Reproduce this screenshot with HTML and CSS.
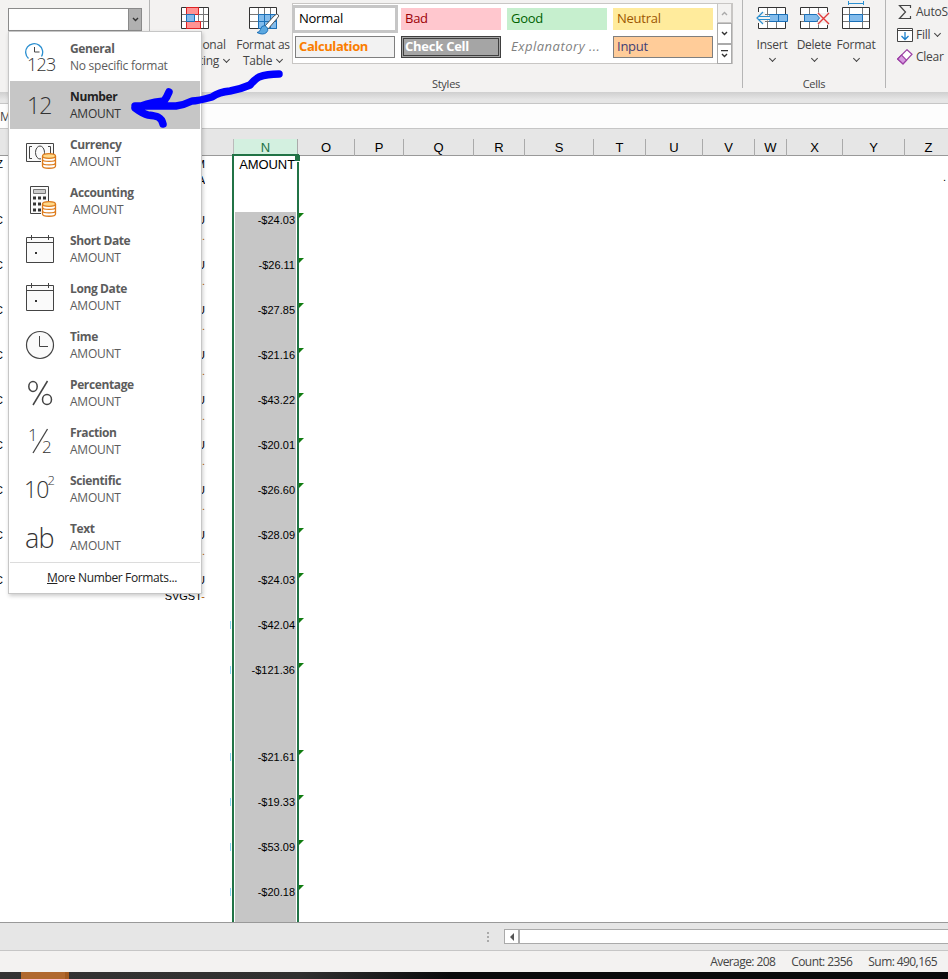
FILE: index.html
```html
<!DOCTYPE html>
<html lang="en">
<head>
  <meta charset="UTF-8" />
  <title>Excel - Number format</title>
  <link rel="stylesheet" href="styles.css">
</head>
<body>

  <!-- Ribbon -->
  <header class="ribbon">
    <div class="group number-group">
      <div class="format-box"><span class="format-arrow"><svg width="7" height="5"><path d="M1 1l2.5 2.5L6 1" fill="none" stroke="#333" stroke-width="1.4"/></svg></span></div>
    </div>

    <div class="group styles-group">
      <div class="tools">
        <div class="tool cond">
          <svg width="28" height="26" viewBox="0 0 28 26"><path d="M1 4h26v21H1z" fill="#fff"/><path d="M1 11.500h26M1 18.500h26M5.500 4v21M17.500 4v21M22.500 4v21" stroke="#777"/><path d="M.5 4.500h27v21H.5z" fill="none" stroke="#333"/><path d="M5.500 4.500h12v7h-12zM5.500 18.500h14v7h-14z" fill="#ff9393" stroke="#d22"/><path d="M5.500 11.500h8v7h-8z" fill="#83bcec" stroke="#1b70b8"/></svg>
          <span>Conditional</span>
          <span>Formatting <i class="chev"></i></span>
        </div>
        <div class="tool table">
          <svg width="31" height="32" viewBox="0 0 31 32"><path d="M1 4h26v21H1z" fill="#fff"/><path d="M1 11.500h26M1 18.500h26M9.500 4v21M15.500 4v21M21.500 4v21" stroke="#777"/><path d="M.5 4.500h27v21H.5z" fill="none" stroke="#333"/><path d="M9.500 11.500h18v14h-18z" fill="#83bcec" stroke="#1b70b8"/><path d="M9 18.500h18M15.500 11v14M21.500 11v14" stroke="#1b70b8"/><path d="M29 11.500q2 1-1 4L19 26l-3-3 9-10q3-3 4-1.500z" fill="#fff" stroke="#555"/><path d="M16 22.500q-4 0-4.500 4-1 3-3.500 3 6 3 9.500 0 2-2 1-4.500z" fill="#5ba8e0" stroke="#1b70b8"/></svg>
          <span>Format as</span>
          <span>Table <i class="chev"></i></span>
        </div>
      </div>
      <div class="gallery">
        <div class="swatches">
          <div class="swatch normal">Normal</div>
          <div class="swatch bad">Bad</div>
          <div class="swatch good">Good</div>
          <div class="swatch neutral">Neutral</div>
          <div class="swatch calc">Calculation</div>
          <div class="swatch check">Check Cell</div>
          <div class="swatch expl">Explanatory ...</div>
          <div class="swatch input">Input</div>
        </div>
        <div class="scroller">
          <div class="off"><svg width="7" height="5"><path d="M1 4l2.500-2.500L6 4" fill="none" stroke="#aaa" stroke-width="1.400"/></svg></div>
          <div><svg width="7" height="5"><path d="M1 1l2.500 2.500L6 1" fill="none" stroke="#333" stroke-width="1.400"/></svg></div>
          <div><svg width="7" height="8"><path d="M0 .5h7M1 4l2.500 2.500L6 4" fill="none" stroke="#333" stroke-width="1.400"/></svg></div>
        </div>
      </div>
      <div class="group-label">Styles</div>
    </div>

    <div class="group cells-group">
      <div class="cell-tools">
        <div class="tool">
          <svg width="32" height="30" viewBox="0 0 32 30"><path d="M3 8h26v20H3z" fill="#fff"/><path d="M3 14.500h26M3 21.500h26M11.500 8v20M20.500 8v20" stroke="#777"/><path d="M2.500 7.500h27v21h-27z" fill="none" stroke="#333"/><path d="M0 12h9v11H0z" fill="#f3f2f1"/><path d="M13.500 14.500h18v7h-18zM22.500 14v7" fill="#83bcec" stroke="#1b70b8"/><path d="M1.500 18L7 12.500v3h7v5H7v3z" fill="#f3f2f1"/><path d="M2 16.500h12M2 19.500h12M7 12l-6 6 6 6" fill="none" stroke="#2b8fd0" stroke-width="1.200"/></svg>
          <span>Insert</span><i class="chev"></i>
        </div>
        <div class="tool">
          <svg width="32" height="30" viewBox="0 0 32 30"><path d="M3 8h26v20H3z" fill="#fff"/><path d="M3 14.500h26M3 21.500h26M11.500 8v20M20.500 8v20" stroke="#777"/><path d="M2.500 7.500h27v21h-27z" fill="none" stroke="#333"/><path d="M0 15h7v6H0zM20 13h12v10H20z" fill="#f3f2f1"/><path d="M6.500 14.500h12l3 3.500-3 3.500h-12z" fill="#83bcec" stroke="#1b70b8"/><path d="M20 13l11 11M31 13L20 24" stroke="#f3f2f1" stroke-width="3.500"/><path d="M20 13l11 11M31 13L20 24" stroke="#e33b3b" stroke-width="1.400"/></svg>
          <span>Delete</span><i class="chev"></i>
        </div>
        <div class="tool">
          <svg width="32" height="30" viewBox="0 0 32 30"><path d="M3 8h26v20H3z" fill="#fff"/><path d="M3 14.500h26M3 21.500h26M9.500 8v20M22.500 8v20" stroke="#777"/><path d="M2.500 7.500h27v21h-27z" fill="none" stroke="#333"/><path d="M9.500 14.500h13v7h-13z" fill="#83bcec" stroke="#1b70b8"/><path d="M8.500 1v4M23.500 1v4M8 3.500h16" stroke="#2b8fd0"/></svg>
          <span>Format</span><i class="chev"></i>
        </div>
      </div>
      <div class="group-label">Cells</div>
    </div>

    <div class="group editing-group">
      <div class="edit-row"><svg width="16" height="16" viewBox="0 0 16 16"><path d="M13.500 4V1.500H2.500L8.500 8l-6 6.500h11V12" fill="none" stroke="#444" stroke-width="1.200"/></svg>AutoSum</div>
      <div class="edit-row"><svg width="16" height="16" viewBox="0 0 16 16"><path d="M.5 1.500h15v13H.5zM.5 3.500h15" fill="#fff" stroke="#444"/><path d="M8 5v7M4.500 9L8 12.500 11.500 9" fill="none" stroke="#1b80cc" stroke-width="1.300"/></svg>Fill <i class="chev"></i></div>
      <div class="edit-row"><svg width="16" height="16" viewBox="0 0 16 16"><path d="M.7 10L10 .7l5 4.500L6 15z" fill="#fff" stroke="#9c3fa5" stroke-width="1.200"/><path d="M.7 10l3.800-3.800 5 5L6 15z" fill="#d79be0" stroke="#9c3fa5" stroke-width="1.200"/></svg>Clear <i class="chev"></i></div>
    </div>
  </header>

  <div class="ribbon-shadow"></div>
  <div class="formula-bar">M</div>

  <!-- Sheet -->
  <div class="col-heads">
    <div class="spacer"></div>
    <div class="col selected">N</div>
    <div class="col">O</div>
    <div class="col">P</div>
    <div class="col">Q</div>
    <div class="col">R</div>
    <div class="col">S</div>
    <div class="col">T</div>
    <div class="col">U</div>
    <div class="col">V</div>
    <div class="col">W</div>
    <div class="col">X</div>
    <div class="col">Y</div>
    <div class="col">Z</div>
  </div>

  <main class="sheet">
    <div class="col-l">
      <div class="head">Z</div>
      <div>C</div><div>C</div><div>C</div><div>C</div><div>C</div><div>C</div><div>C</div><div>C</div><div>C</div>
    </div>
    <div class="col-m">
      <div class="head">M<br>A</div>
      <div>U<br><b>.</b></div><div>U<br><b>.</b></div><div>U<br><b>.</b></div><div>U<br><b>.</b></div><div>U<br><b>.</b></div><div>U<br><b>.</b></div><div>U<br><b>.</b></div><div>U<br><b>.</b></div>
      <div>U<br>SVGST<b>-</b></div>
    </div>
    <div class="marks">
      <i></i><i class="tall"></i><i></i><i></i><i></i><i></i>
    </div>
    <div class="col-n">
      <div class="head">AMOUNT</div>
      <div>-$24.03</div>
      <div>-$26.11</div>
      <div>-$27.85</div>
      <div>-$21.16</div>
      <div>-$43.22</div>
      <div>-$20.01</div>
      <div>-$26.60</div>
      <div>-$28.09</div>
      <div>-$24.03</div>
      <div>-$42.04</div>
      <div class="tall">-$121.36</div>
      <div>-$21.61</div>
      <div>-$19.33</div>
      <div>-$53.09</div>
      <div>-$20.18</div>
    </div>
    <div class="col-z">.</div>
  </main>

  <div class="tab-strip">
    <div class="grip"><i></i><i></i><i></i></div>
    <div class="scroll-left"><svg width="4" height="8"><path d="M4 0v8L0 4z" fill="#555"/></svg></div>
    <div class="scroll-track"></div>
  </div>
  <footer class="status">
    <span>Average: 208</span>
    <span>Count: 2356</span>
    <span>Sum: 490,165</span>
  </footer>
  <div class="taskbar"><div class="task"></div></div>

  <!-- Number format menu -->
  <div class="format-menu">
    <div class="item">
      <svg width="32" height="34" viewBox="0 0 32 34"><path d="M3.500 17.500a8.500 8.500 0 1 1 13-2" fill="none" stroke="#2b8fd0" stroke-width="1.300"/><path d="M9.500 6v5h5" fill="none" stroke="#444"/><text x="2" y="30" class="glyph s18">123</text></svg>
      <div><b>General</b><span>No specific format</span></div>
    </div>
    <div class="item active">
      <svg width="32" height="34" viewBox="0 0 32 34"><text x="2" y="25" class="glyph s23">12</text></svg>
      <div><b>Number</b><span>AMOUNT</span></div>
    </div>
    <div class="item">
      <svg width="32" height="34" viewBox="0 0 32 34"><path d="M1.500 6.500h27v18h-27z" fill="#fafafa" stroke="#444"/><path d="M7 9.500H4.500v12H7M23 9.500h2.500v12H23" fill="none" stroke="#444"/><ellipse cx="15" cy="15.500" rx="4.500" ry="6.500" fill="#fafafa" stroke="#444"/><path d="M16 17h16v16H16z" fill="#fff"/><path d="M17.500 19v10c0 3 13 3 13 0V19" fill="#fff" stroke="#dc7b1c" stroke-width="1.300"/><path d="M17.500 22.500c0 2.500 13 2.500 13 0M17.500 26c0 2.500 13 2.500 13 0" fill="none" stroke="#dc7b1c" stroke-width="1.300"/><ellipse cx="24" cy="19" rx="6.500" ry="2.300" fill="#ffd98a" stroke="#dc7b1c" stroke-width="1.300"/></svg>
      <div><b>Currency</b><span>AMOUNT</span></div>
    </div>
    <div class="item">
      <svg width="32" height="34" viewBox="0 0 32 34"><path d="M5.500 1.500h18v27h-18z" fill="#fafafa" stroke="#444"/><path d="M8.500 4.500h12v4h-12z" fill="#ccc" stroke="#777"/><path d="M8 13h3M13 13h3M18 13h3M8 19h3M13 19h3M8 25h3M13 25h3" stroke="#333" stroke-width="3"/><path d="M16 17h16v16H16z" fill="#fff"/><path d="M17.500 19v10c0 3 13 3 13 0V19" fill="#fff" stroke="#dc7b1c" stroke-width="1.300"/><path d="M17.500 22.500c0 2.500 13 2.500 13 0M17.500 26c0 2.500 13 2.500 13 0" fill="none" stroke="#dc7b1c" stroke-width="1.300"/><ellipse cx="24" cy="19" rx="6.500" ry="2.300" fill="#ffd98a" stroke="#dc7b1c" stroke-width="1.300"/></svg>
      <div><b>Accounting</b><span>&nbsp;AMOUNT</span></div>
    </div>
    <div class="item">
      <svg width="32" height="34" viewBox="0 0 32 34"><path d="M1.500 4.500h27v25h-27zM1.500 9.500h27M6.500 2v5M23.500 2v5" fill="#fafafa" stroke="#444"/><path d="M10 19h2v2h-2z" fill="#333"/></svg>
      <div><b>Short Date</b><span>AMOUNT</span></div>
    </div>
    <div class="item">
      <svg width="32" height="34" viewBox="0 0 32 34"><path d="M1.500 4.500h27v25h-27zM1.500 9.500h27M6.500 2v5M23.500 2v5" fill="#fafafa" stroke="#444"/><path d="M10 19h2v2h-2z" fill="#333"/></svg>
      <div><b>Long Date</b><span>AMOUNT</span></div>
    </div>
    <div class="item">
      <svg width="32" height="34" viewBox="0 0 32 34"><circle cx="15" cy="16" r="13.500" fill="#fafafa" stroke="#444" stroke-width="1.200"/><path d="M14.500 7v10.500H23" fill="none" stroke="#444"/></svg>
      <div><b>Time</b><span>AMOUNT</span></div>
    </div>
    <div class="item">
      <svg width="32" height="34" viewBox="0 0 32 34"><g fill="none" stroke="#444" stroke-width="1.500"><ellipse cx="8" cy="9.500" rx="4.200" ry="5"/><ellipse cx="22" cy="22.500" rx="4.500" ry="5"/><path d="M22.500 4L8 28"/></g></svg>
      <div><b>Percentage</b><span>AMOUNT</span></div>
    </div>
    <div class="item">
      <svg width="32" height="34" viewBox="0 0 32 34"><text x="3" y="16" class="glyph s17">1</text><path d="M22.500 4L8 28" stroke="#444" stroke-width="1.300"/><text x="17" y="28" class="glyph s17">2</text></svg>
      <div><b>Fraction</b><span>AMOUNT</span></div>
    </div>
    <div class="item">
      <svg width="32" height="34" viewBox="0 0 32 34"><text x="-1" y="25" class="glyph s23">10</text><text x="22.500" y="12" class="glyph s13">2</text></svg>
      <div><b>Scientific</b><span>AMOUNT</span></div>
    </div>
    <div class="item">
      <svg width="32" height="34" viewBox="0 0 32 34"><text x="0" y="27" class="glyph s27">ab</text></svg>
      <div><b>Text</b><span>AMOUNT</span></div>
    </div>
    <div class="more"><u>M</u>ore Number Formats...</div>
  </div>

  <!-- Hand-drawn arrow -->
  <svg class="arrow" width="160" height="64" viewBox="0 0 160 64">
    <path d="M151 9q-12 0-20 3-4 2-9 8-9 4-20 6-11 1-18 6-14 4-20 4-8 4-16 5H7M41 27q-2 5-5 9-10 1-17 3L7 43q8 6 13 7 8 1 10 2 4 2 5 7"/>
  </svg>

</body>
</html>
```
FILE: styles.css
```css
:root {
  --ui: "Open Sans", "Noto Sans", sans-serif;
  --ribbon: #f3f2f1;
  --strip: #e6e6e6;
  --line: #999;
  --green: #217346;
}

* {
  box-sizing: border-box;
}

body {
  margin: 0;
  width: 948px;
  height: 979px;
  overflow: hidden;
  display: flex;
  flex-direction: column;
  position: relative;
  font-family: var(--ui);
  font-size: 12px;
  letter-spacing: -0.25px;
  color: #444;
  background: white;
}

svg {
  display: block;
  flex: none;
}

/* Ribbon */
.ribbon {
  height: 92px;
  flex: none;
  display: flex;
  background: var(--ribbon);
  overflow: hidden;
}

.group {
  display: flex;
  flex: none;
}

.number-group {
  width: 150px;
  padding: 8px 0 0 8px;
  border-right: 1px solid #b5b5b5;
}

.format-box {
  width: 134px;
  height: 23px;
  border: 1px solid #8a8a8a;
  background: white;
  display: flex;
  justify-content: flex-end;
}

.format-arrow {
  width: 13px;
  background: #b0b0b0;
  border-left: 1px solid #8a8a8a;
  display: flex;
  align-items: center;
  justify-content: center;
}

.styles-group {
  width: 592px;
  display: grid;
  grid-template-columns: 142px 1fr;
  grid-template-rows: 76px 16px;
}

.tools {
  display: flex;
  padding: 3px 0 0 12px;
}

.tool {
  display: flex;
  flex-direction: column;
  align-items: center;
  white-space: nowrap;
}

.tool span {
  line-height: 16px;
}

.tools .tool {
  width: 66px;
}

.tools .tool svg {
  height: 32px;
  margin: 0 0 2px 2px;
}

.tools .cond svg {
  height: 26px;
  margin: 0 0 8px;
}

.tools .table {
  width: 70px;
  flex: none;
}

.chev {
  display: inline-block;
  width: 5px;
  height: 5px;
  margin: 0 1px 3px 2px;
  border: solid #444;
  border-width: 0 1px 1px 0;
  transform: rotate(45deg);
}

.gallery {
  width: 441px;
  height: 61px;
  margin-top: 3px;
  display: flex;
  background: white;
  border: 1px solid #c8c6c4;
}

.swatches {
  width: 425px;
  display: grid;
  grid-template-columns: repeat(4, 100px);
  grid-template-rows: 22px 22px;
  gap: 6px;
  padding: 4px 2px;
}

.swatch {
  font-size: 13px;
  line-height: 19px;
  padding-left: 3px;
  border: 1px solid transparent;
  white-space: nowrap;
}

.normal { color: #000; outline: 3px solid #c6c6c6; }
.bad { color: #9c0006; background: #ffc7ce; }
.good { color: #006100; background: #c6efce; }
.neutral { color: #9c5700; background: #ffeb9c; }
.calc { color: #fa7d00; background: #f2f2f2; border-color: #7f7f7f; font-weight: bold; letter-spacing: -0.4px; }
.check { color: white; background: #a5a5a5; border: 3px double #3f3f3f; font-weight: bold; line-height: 15px; padding-left: 1px; }
.expl { color: #7f7f7f; font-style: italic; letter-spacing: 0.5px; }
.input { color: #3f3f76; background: #ffcc99; border-color: #7f7f7f; }

.scroller {
  width: 15px;
  margin: -1px;
  display: flex;
  flex-direction: column;
}

.scroller div {
  flex: 1;
  border: 1px solid #aaa;
  display: flex;
  align-items: center;
  justify-content: center;
}

.scroller .off {
  border-color: #c8c6c4;
  background: var(--ribbon);
}

.group-label {
  line-height: 16px;
  font-size: 11px;
  text-align: center;
}

.styles-group .group-label {
  grid-column: 1 / 3;
}

.cells-group {
  width: 144px;
  flex-direction: column;
  border: solid #b5b5b5;
  border-width: 0 1px;
  height: 88px;
}

.cell-tools {
  display: flex;
  flex: none;
  height: 76px;
  padding-left: 8px;
}

.cells-group .group-label {
  line-height: 15px;
}

.cell-tools .tool {
  width: 42px;
}

.cell-tools .tool svg {
  margin-bottom: 7px;
}

.cell-tools .chev {
  margin-top: 3px;
}

.editing-group {
  flex-direction: column;
  padding-left: 11px;
}

.edit-row {
  display: flex;
  align-items: center;
  gap: 3px;
  height: 23px;
  white-space: nowrap;
}

.edit-row:last-child {
  height: 21px;
}

.ribbon-shadow {
  height: 11px;
  flex: none;
  background: linear-gradient(#cfcfcf, var(--strip) 70%);
}

.formula-bar {
  height: 26px;
  flex: none;
  border: solid #c6c6c6;
  border-width: 1px 0;
  background: #fdfdfd;
  line-height: 26px;
}

/* Sheet */
.col-heads {
  height: 27px;
  flex: none;
  display: grid;
  grid-template-columns: 233px 65px 57px 49px 70px 51px 69px 52px 57px 52px 32px 56px 62px 1fr;
  padding-top: 10px;
  background: var(--strip);
  border-bottom: 1px solid var(--line);
}

.col {
  font-family: "Liberation Sans", Arial, sans-serif;
  font-size: 13px;
  line-height: 17px;
  letter-spacing: 0;
  text-align: center;
  color: #000;
  border-right: 1px solid #aaa;
}

.col.selected {
  background: #d3f0e0;
  color: var(--green);
  border-left: 1px solid #bbb;
}

.col:last-child {
  padding-left: 4px;
  border: none;
}

.sheet {
  height: 766px;
  flex: none;
  display: flex;
  font-family: "Liberation Sans", Arial, sans-serif;
  font-size: 11px;
  letter-spacing: 0;
  color: #000;
}

.sheet .head {
  height: 56px;
}

.col-l,
.col-m {
  overflow: hidden;
  line-height: 16px;
}

.col-l {
  width: 3px;
  display: flex;
  flex-direction: column;
  align-items: flex-end;
}

.col-l div,
.col-m div {
  height: 45px;
  flex: none;
}

.col-m {
  width: 202px;
  text-align: right;
}

.col-m b {
  color: #b45f06;
  font-weight: normal;
}

.marks {
  width: 28px;
  padding: 465px 2px 0 0;
  display: flex;
  flex-direction: column;
  align-items: flex-end;
}

.marks i {
  width: 1px;
  height: 8px;
  margin-bottom: 37px;
  flex: none;
  background: #8fd6f7;
}

.marks .tall {
  margin-bottom: 79px;
}

.col-n {
  width: 67px;
  height: 768px;
  margin: -2px 0 0 -1px;
  border: solid var(--green);
  border-width: 2px 2px 0;
}

.col-n div {
  height: 45px;
  line-height: 16px;
  text-align: right;
  padding-right: 1px;
  position: relative;
  background: #c6c6c6;
  border: solid white;
  border-width: 0 1px;
}

.col-n .head {
  font-size: 13px;
  line-height: 17px;
  padding-right: 1px;
  letter-spacing: -0.1px;
  background: white;
}

.col-n .tall {
  height: 87px;
}

.col-n div:last-child {
  height: 38px;
}

/* green error flag at the cell corner */
.col-n div:not(.head)::after {
  content: "";
  position: absolute;
  left: 64px;
  top: 1px;
  border: solid transparent;
  border-width: 0 0 5px 5px;
  border-left-color: #107c10;
}

.col-n .head::after {
  content: "";
  position: absolute;
  right: -4px;
  top: -1px;
  width: 5px;
  height: 6px;
  background: var(--green);
  border-bottom: 1px solid white;
}

.col-z {
  margin-left: auto;
  width: 5px;
  padding-top: 15px;
}

/* Bottom bars */
.tab-strip {
  height: 29px;
  flex: none;
  display: flex;
  align-items: center;
  background: var(--strip);
  border-top: 1px solid var(--line);
  border-bottom: 1px solid #c6c6c6;
}

.grip {
  width: 504px;
  padding-left: 487px;
}

.grip i {
  display: block;
  width: 2px;
  height: 2px;
  margin: 2px 0;
  background: #aaa;
}

.scroll-left {
  width: 15px;
  height: 15px;
  background: white;
  border: 1px solid #aaa;
  display: flex;
  align-items: center;
  justify-content: center;
}

.scroll-track {
  flex: 1;
  height: 15px;
  background: white;
  border: 1px solid #aaa;
  border-right: 0;
}

.status {
  height: 21px;
  flex: none;
  display: flex;
  justify-content: flex-end;
  gap: 16px;
  padding-right: 11px;
  line-height: 22px;
  letter-spacing: -0.58px;
  background: var(--ribbon);
}

.taskbar {
  height: 7px;
  flex: none;
  padding-left: 21px;
  background: linear-gradient(90deg, #333 0, #303030 300px, #090a0c 450px);
}

.task {
  width: 48px;
  height: 7px;
  background: #b0682e;
  border-right: 4px solid #a25a20;
}

/* Number format menu */
.format-menu {
  position: absolute;
  left: 8px;
  top: 31px;
  width: 194px;
  height: 563px;
  padding: 1px;
  background: white;
  border: 1px solid #c6c6c6;
  box-shadow: 1px 2px 4px rgba(0,0,0,0.2);
}

.item {
  height: 48px;
  display: flex;
  padding: 7px 0 0 15px;
  gap: 13px;
  color: #5c5c5c;
}

.item svg {
  margin-top: 1px;
}

.item b,
.item span {
  display: block;
  line-height: 17px;
}

.item b {
  letter-spacing: -0.38px;
}

.item.active {
  background: #c6c6c6;
  color: #333;
}

.item.active b {
  color: #222;
}

.glyph {
  font-family: "Open Sans", sans-serif;
  font-weight: 300;
  fill: #333;
  letter-spacing: -0.8px;
}

.s13 { font-size: 13px; }
.s17 { font-size: 17px; }
.s18 { font-size: 18px; }
.s23 { font-size: 23px; }
.s27 { font-size: 27px; }

.more {
  border-top: 1px solid #dcdcdc;
  margin-top: 1px;
  padding-left: 37px;
  line-height: 30px;
  letter-spacing: -0.36px;
  color: #222;
}

.arrow {
  position: absolute;
  left: 128px;
  top: 65px;
}

.arrow path {
  fill: none;
  stroke: #0000fe;
  stroke-width: 7.5;
  stroke-linecap: round;
  stroke-linejoin: round;
}
```
